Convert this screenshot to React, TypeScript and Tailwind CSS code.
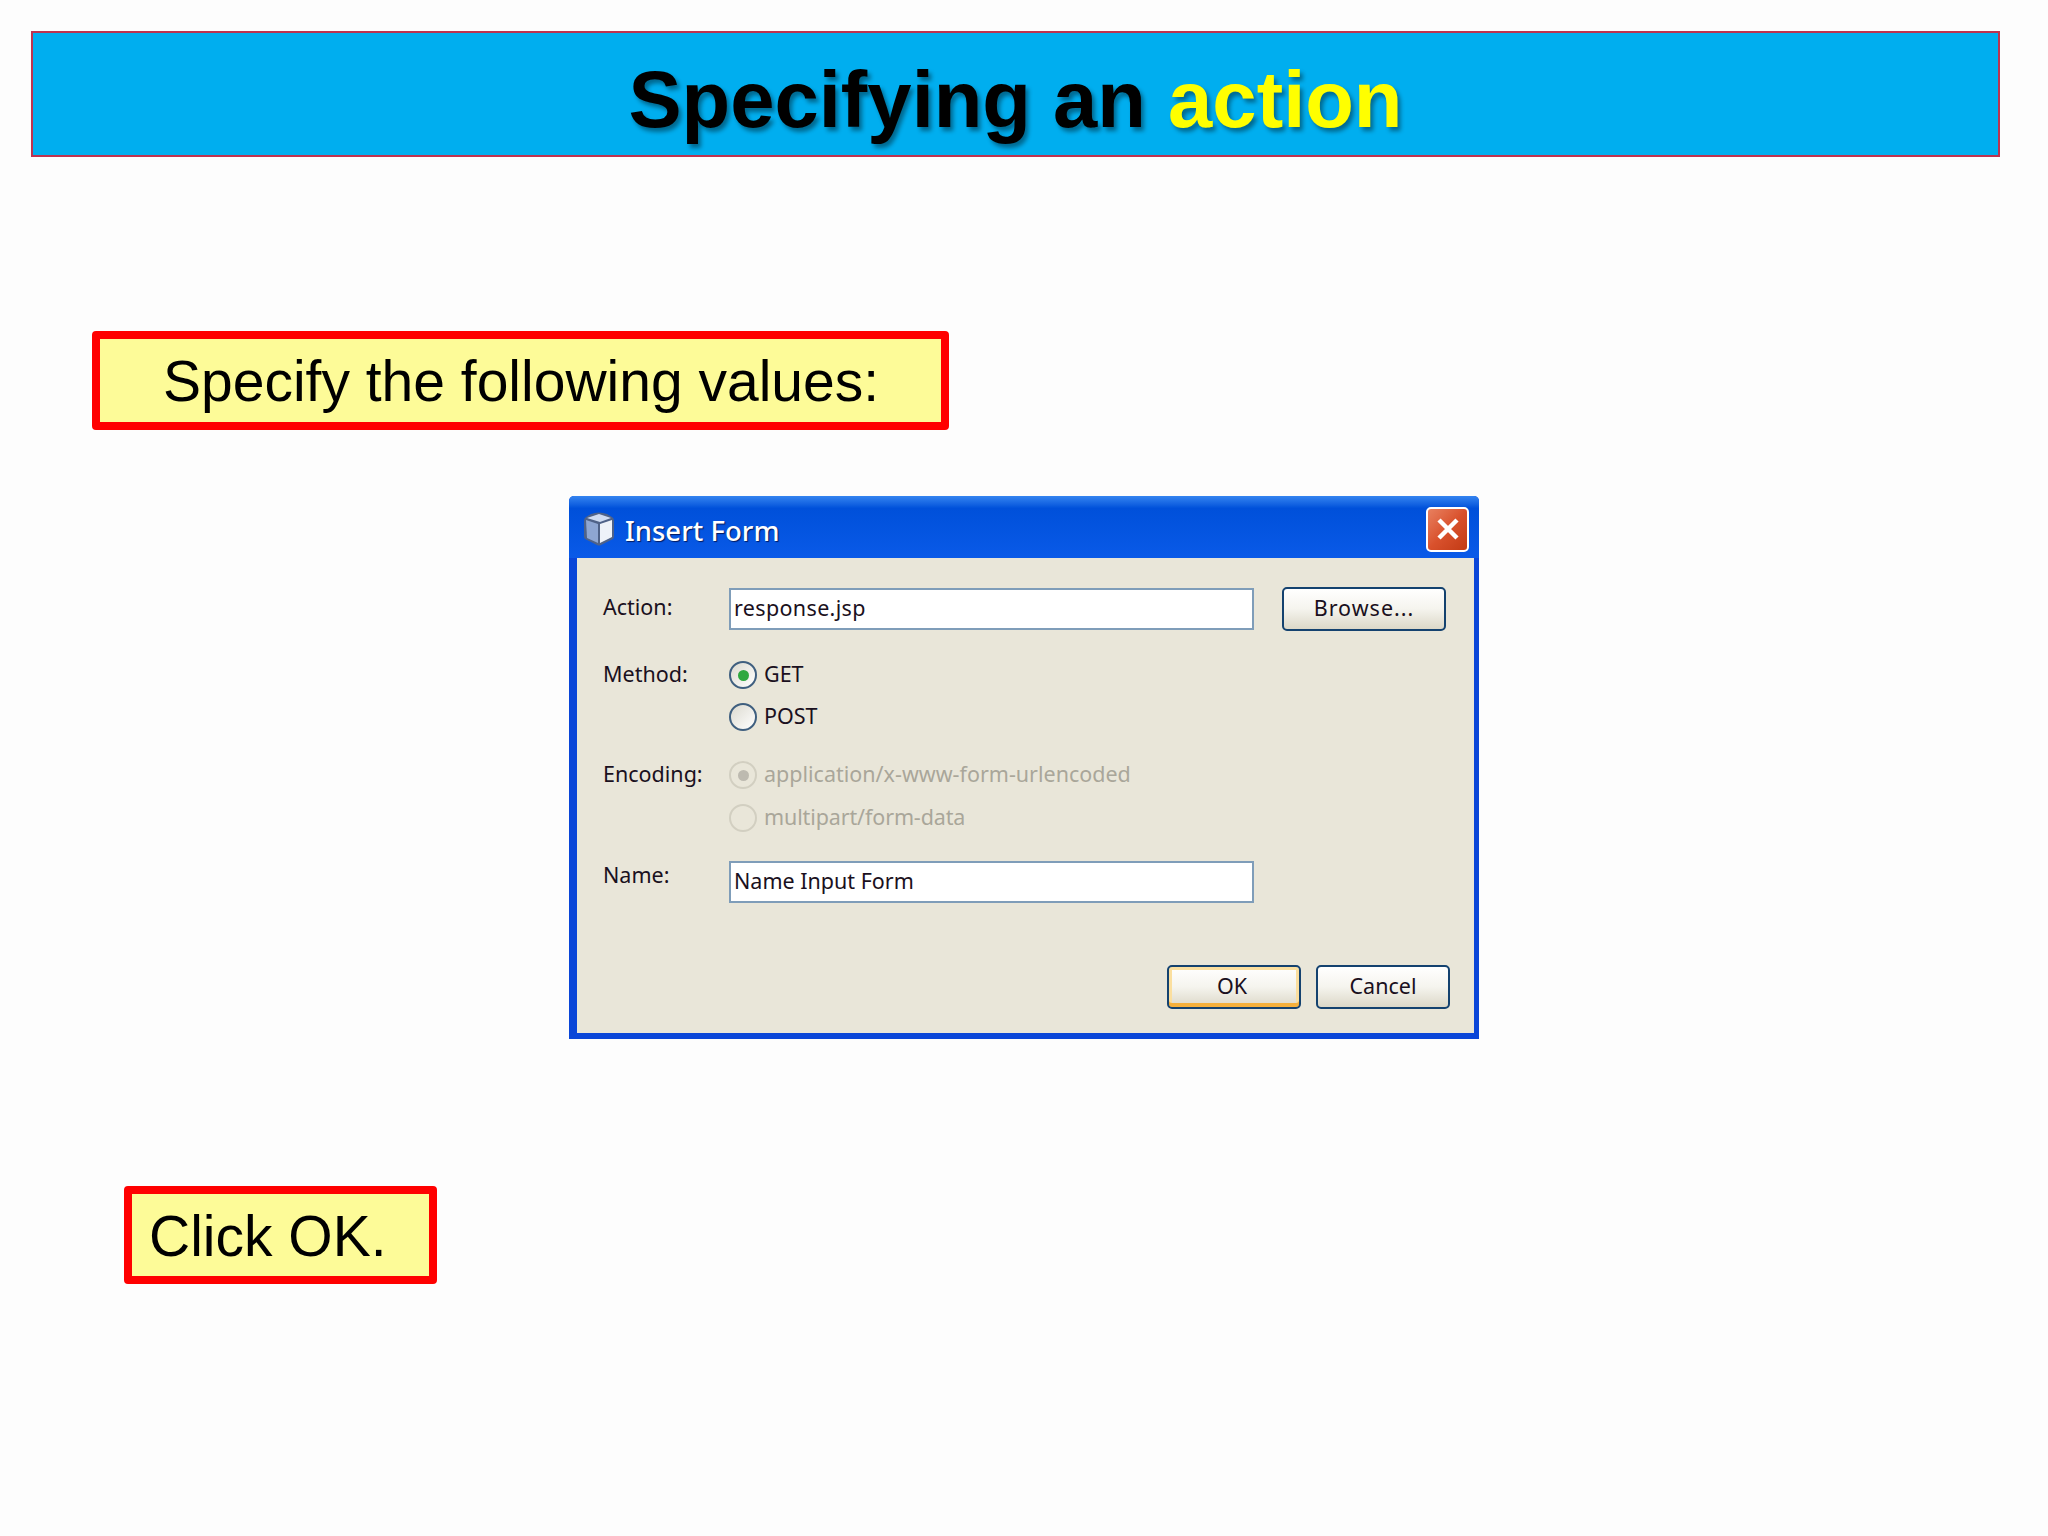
export default function App() {
  return (
    <div className="w-[2048px] h-[1536px] bg-[#fdfdfd] flex flex-col font-['Liberation_Sans',Arial,sans-serif] overflow-hidden">
      <header className="mt-[31px] ml-[31px] w-[1969px] h-[126px] box-border border-2 border-[#bd3350] bg-[#00aeef] flex justify-center pt-[21px]">
        <h1 className="m-0 text-[79.6px] leading-[92px] font-bold text-black [text-shadow:3px_4px_4px_rgba(0,0,0,0.4)] whitespace-nowrap">
          Specifying an <span className="text-[#ffff00]">action</span>
        </h1>
      </header>

      <div className="mt-[174px] ml-[92px] w-[857px] h-[99px] box-border border-[8px] border-[#ff0000] rounded-[4px] bg-[#fdfb98] flex items-center pl-[63px] pt-[2px]">
        <span className="text-[57px] leading-none text-black whitespace-nowrap">Specify the following values:</span>
      </div>

      <Dialog />

      <div className="mt-[147px] ml-[124px] w-[313px] h-[98px] box-border border-[8px] border-[#ff0000] rounded-[4px] bg-[#fdfb98] flex items-center pl-[17px] pt-[2px]">
        <span className="text-[57px] leading-none text-black whitespace-nowrap">Click OK.</span>
      </div>
    </div>
  );
}

const uiFont = "font-['Noto_Sans','DejaVu_Sans',sans-serif]";

function Dialog() {
  return (
    <div className={`mt-[66px] ml-[569px] w-[910px] h-[543px] box-border rounded-t-[5px] bg-[#0a46d8] flex flex-col ${uiFont} text-[21.5px] text-[#1a1020]`}>
      <div className="h-[62px] shrink-0 rounded-t-[5px] bg-linear-to-b from-[#3484f0] via-[#0050da] via-20% to-[#0a5ae8] flex items-center pl-[14px] pr-[10px] pt-[4px]">
        <CubeIcon />
        <span className="ml-[10px] mt-[3px] text-[27.5px] leading-none font-medium text-white [text-shadow:1px_1px_1px_rgba(0,0,40,0.7)] whitespace-nowrap">Insert Form</span>
        <div className="ml-auto w-[43px] h-[45px] box-border border-2 border-white rounded-[5px] bg-linear-to-br from-[#e8805f] via-[#d9512c] to-[#c23a14] flex items-center justify-center">
          <svg width="26" height="26" viewBox="0 0 26 26">
            <path d="M4 4 L22 22 M22 4 L4 22" stroke="#ffffff" strokeWidth="4.5" strokeLinecap="butt" />
          </svg>
        </div>
      </div>

      <div className="ml-[8px] mb-[6px] mr-[5px] flex-1 bg-[#e9e6d9] flex flex-col pl-[26px]">
        <div className="mt-[28px] flex items-center h-[45px]">
          <span className="w-[126px] -mt-[2px]">Action:</span>
          <Field value="response.jsp" className="tracking-[0.35px]" />
          <Button className="ml-[28px] w-[164px] tracking-[1px]">Browse...</Button>
        </div>

        <div className="mt-[30px] flex">
          <span className="w-[126px] h-[28px] leading-[26px]">Method:</span>
          <div className="flex flex-col">
            <Radio label="GET" checked />
            <Radio label="POST" className="mt-[14px]" />
          </div>
        </div>

        <div className="mt-[30px] flex">
          <span className="w-[126px] h-[28px] leading-[26px]">Encoding:</span>
          <div className="flex flex-col">
            <Radio label="application/x-www-form-urlencoded" checked disabled />
            <Radio label="multipart/form-data" disabled className="mt-[15px] tracking-[-0.12px]" />
          </div>
        </div>

        <div className="mt-[29px] flex items-start">
          <span className="w-[126px] h-[30px] leading-[28px]">Name:</span>
          <Field value="Name Input Form" />
        </div>

        <div className="mt-[62px] flex">
          <Button primary className="ml-[564px] w-[134px] pr-[4px]">OK</Button>
          <Button className="ml-[15px] w-[134px]">Cancel</Button>
        </div>
      </div>
    </div>
  );
}

function Field({ value, className = "" }: { value: string; className?: string }) {
  return (
    <div className={`w-[525px] h-[42px] box-border border-2 border-[#7f9db9] bg-white flex items-center pl-[3px] pb-[2px] leading-none whitespace-nowrap ${className}`}>
      {value}
    </div>
  );
}

function Button({ children, className = "", primary = false }: { children: string; className?: string; primary?: boolean }) {
  return (
    <div
      className={`h-[44px] box-border border-2 border-[#14426f] rounded-[5px] bg-linear-to-b from-white via-[#f5f4ee] to-[#dcd8c8] flex items-center justify-center leading-none pb-[2px] ${
        primary ? "shadow-[inset_0_-4px_0_#f5b03c,inset_0_0_0_3px_#fbdf9f]" : ""
      } ${className}`}
    >
      {children}
    </div>
  );
}

function Radio({ label, checked = false, disabled = false, className = "" }: { label: string; checked?: boolean; disabled?: boolean; className?: string }) {
  return (
    <div className={`flex items-center h-[28px] ${className}`}>
      <div
        className={`w-[28px] h-[28px] box-border rounded-full border-2 flex items-center justify-center ${
          disabled ? "border-[#d2cfc1] bg-[#e9e6d9]" : "border-[#3f5f7f] bg-linear-to-br from-[#dcdad0] to-white"
        }`}
      >
        {checked && <div className={`w-[11px] h-[11px] rounded-full ${disabled ? "bg-[#bdbab0]" : "bg-[#2fa83f]"}`} />}
      </div>
      <span className={`ml-[7px] -mt-[2px] whitespace-nowrap ${disabled ? "text-[#a9a69a]" : ""}`}>{label}</span>
    </div>
  );
}

function CubeIcon() {
  return (
    <svg width="32" height="34" viewBox="0 0 32 34" className="shrink-0">
      <path d="M8 2 Q16 -1 24 2 L29 5 Q31 6 31 9 V25 Q31 27 28 28 L18 33 Q16 34 14 33 L4 28 Q1 27 1 25 V9 Q1 6 3 5 Z" fill="#4f6288" />
      <path d="M16 2 L28 6 L17 10 L4 6 Z" fill="#cfdcf2" />
      <path d="M3 8 L15 12 V31 L4 26 Z" fill="#8ea6d2" />
      <path d="M17 12 L29 8 V25 L17 31 Z" fill="#eef2f9" />
    </svg>
  );
}
